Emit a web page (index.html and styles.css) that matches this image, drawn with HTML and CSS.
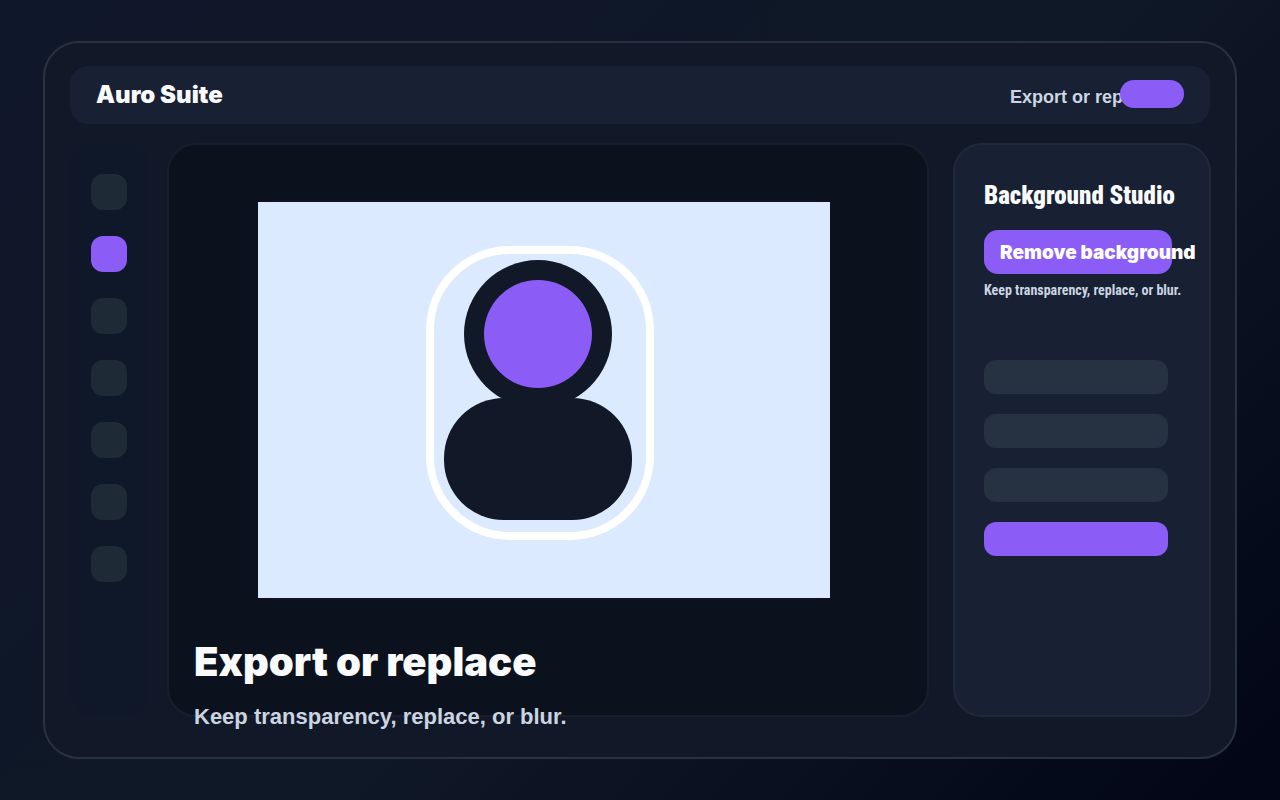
FILE: index.html
```html
<!DOCTYPE html>
<html lang="en">
<head>
  <meta charset="UTF-8" />
  <meta name="viewport" content="width=device-width, initial-scale=1.0" />
  <title>Auro Suite</title>
  <link rel="stylesheet" href="styles.css">
</head>
<body>
  <div class="shell">
    <header class="topbar">
      <h1 class="brand">Auro Suite</h1>
      <span class="status">Export or rep</span>
      <button class="pill" type="button" aria-label="Export"></button>
    </header>

    <div class="workspace">
      <nav class="rail" aria-label="Tools">
        <button class="tool" type="button" aria-label="Select"></button>
        <button class="tool active" type="button" aria-label="Background"></button>
        <button class="tool" type="button" aria-label="Crop"></button>
        <button class="tool" type="button" aria-label="Brush"></button>
        <button class="tool" type="button" aria-label="Text"></button>
        <button class="tool" type="button" aria-label="Shapes"></button>
        <button class="tool" type="button" aria-label="Layers"></button>
      </nav>

      <main class="canvas">
        <svg class="photo" viewBox="0 0 572 396" aria-hidden="true">
          <rect width="572" height="396" fill="#dbeafe" />
          <rect x="172" y="48" width="220" height="286" rx="80" fill="none" stroke="#fff" stroke-width="8" />
          <circle cx="280" cy="132" r="74" fill="#111827" />
          <rect x="186" y="196" width="188" height="122" rx="60" fill="#111827" />
          <circle cx="280" cy="132" r="54" fill="#8b5cf6" />
        </svg>
        <div class="caption">
          <h2>Export or replace</h2>
          <p>Keep transparency, replace, or blur.</p>
        </div>
      </main>

      <aside class="panel">
        <h2>Background Studio</h2>
        <button class="remove" type="button">Remove background</button>
        <p>Keep transparency, replace, or blur.</p>
        <div class="options">
          <button class="option" type="button" aria-label="Transparent"></button>
          <button class="option" type="button" aria-label="Replace"></button>
          <button class="option" type="button" aria-label="Blur"></button>
          <button class="option active" type="button" aria-label="Export"></button>
        </div>
      </aside>
    </div>
  </div>
</body>
</html>
```
FILE: styles.css
```css
* {
  box-sizing: border-box;
}

body {
  margin: 0;
  padding: 41px 43px;
  min-height: 100vh;
  display: flex;
  background: linear-gradient(135deg, #0f172a 0%, #0f1826 55%, #020617 98%);
  color: #f8fafc;
  font-family: "Liberation Sans", Arial, sans-serif;
}

h1,
h2,
p {
  margin: 0;
}

button {
  display: block;
  padding: 0;
  border: none;
  cursor: pointer;
}

.shell {
  flex: 1;
  display: flex;
  flex-direction: column;
  gap: 19px;
  padding: 23px 24px 40px;
  background: #111827;
  border: 2px solid #2b323f;
  border-radius: 36px;
}

.topbar {
  display: flex;
  align-items: center;
  height: 58px;
  margin: 0 1px;
  padding: 0 26px;
  background: #182033;
  border-radius: 18px;
}

.brand,
.caption h2,
.remove {
  font-family: "Arial Black", Inter, sans-serif;
  font-weight: 900;
}

.brand {
  font-size: 24px;
  line-height: 28px;
}

.status {
  width: 110px;
  margin-left: auto;
  padding-top: 4px;
  color: #cbd5e1;
  font-size: 18px;
  font-weight: bold;
  line-height: 24px;
  white-space: nowrap;
}

.pill {
  position: relative;
  width: 64px;
  height: 28px;
  margin-bottom: 2px;
  background: #8b5cf6;
  border-radius: 14px;
}

.workspace {
  flex: 1;
  display: grid;
  grid-template-columns: 80px 1fr 258px;
}

.rail {
  display: flex;
  flex-direction: column;
  align-items: center;
  gap: 26px;
  margin: 1px;
  padding-top: 30px;
  background: #0f1829;
  border-radius: 24px;
}

.tool {
  width: 36px;
  height: 36px;
  background: #1f2a37;
  border-radius: 12px;
}

.canvas {
  margin: 0 24px 0 18px;
  padding: 57px 25px 0;
  background: #0b111d;
  border: 2px solid #181f2b;
  border-radius: 29px;
}

.photo {
  display: block;
  width: calc(100% - 136px);
  margin-left: 64px;
}

.caption {
  margin: 40px 0 -20px;
}

.caption h2 {
  font-size: 40px;
  line-height: 48px;
}

.caption p {
  margin-top: 18px;
  color: #cbd5e1;
  font-size: 22px;
  font-weight: bold;
  line-height: 26px;
}

.panel {
  padding: 35px 29px;
  background: #182033;
  border: 2px solid #202939;
  border-radius: 29px;
}

.panel h2 {
  font-family: "Roboto Condensed", Roboto, sans-serif;
  font-size: 25px;
  font-weight: 900;
  line-height: 32px;
  white-space: nowrap;
}

.remove {
  width: 188px;
  height: 44px;
  margin-top: 18px;
  padding-left: 16px;
  background: #8b5cf6;
  border-radius: 14px;
  color: #fff;
  font-size: 19px;
  text-align: left;
  white-space: nowrap;
}

.panel p {
  margin-top: 6px;
  color: #cbd5e1;
  font-family: "Roboto Condensed", Roboto, sans-serif;
  font-size: 14px;
  font-weight: bold;
  line-height: 20px;
  white-space: nowrap;
}

.options {
  display: grid;
  gap: 20px;
  margin-top: 60px;
}

.option {
  width: 184px;
  height: 34px;
  background: #263241;
  border-radius: 12px;
}

.tool.active,
.option.active {
  background: #8b5cf6;
}
```
